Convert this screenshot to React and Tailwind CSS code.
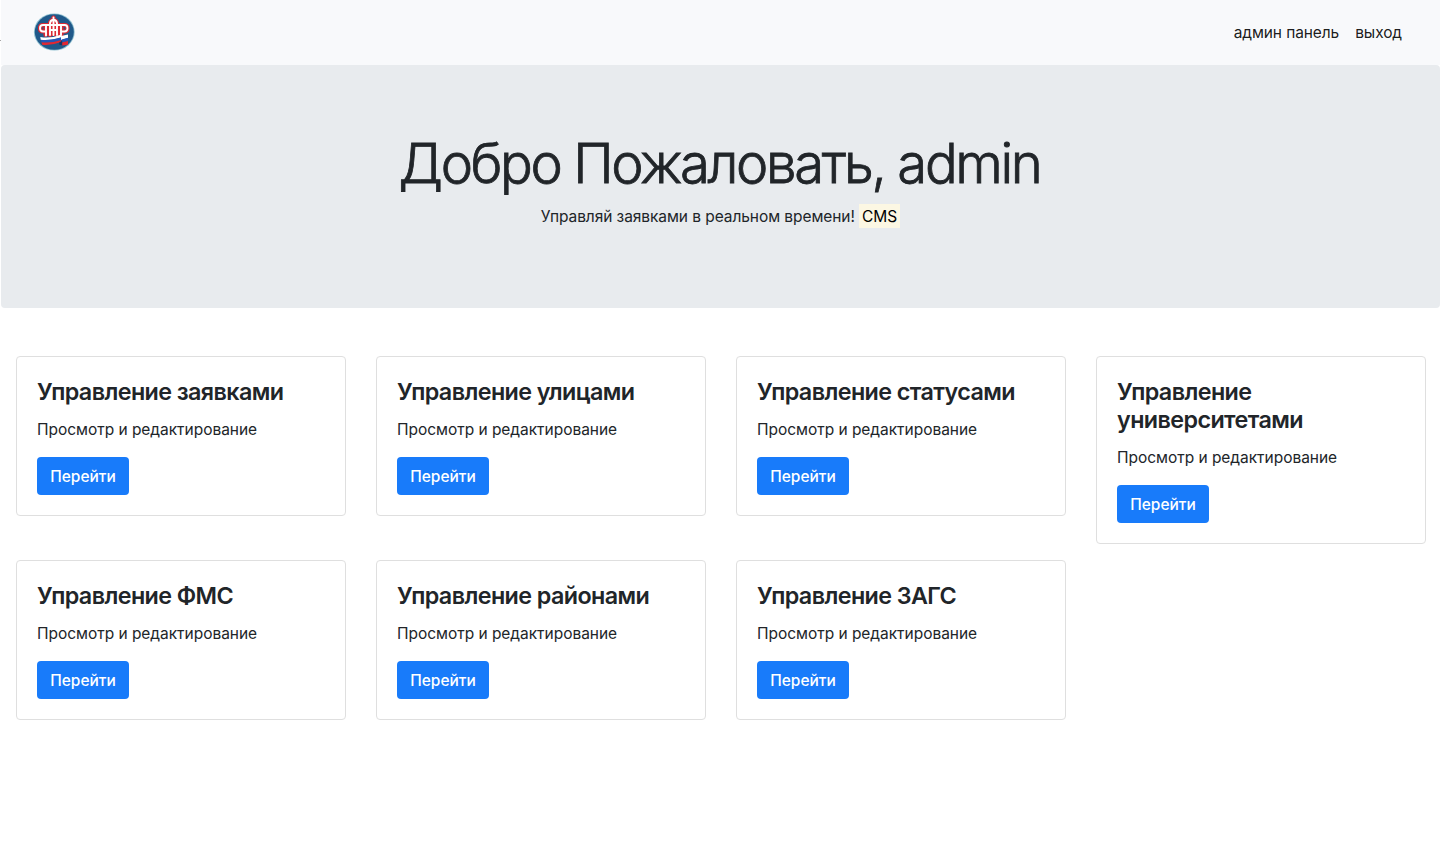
import React from "react";

function Logo() {
  return (
    <svg viewBox="0 0 42 38" className="mb-0.5 h-[38px] w-[42px]">
      <ellipse cx="21.3" cy="19" rx="20.4" ry="18.6" fill="#8fc0d0" />
      <ellipse cx="21.3" cy="19" rx="19.5" ry="17.8" fill="#20598a" />
      <g fill="none" strokeLinejoin="round" strokeLinecap="round">
        <g stroke="#dc2a35" strokeWidth="4.2">
          <path d="M20.500 4.500V8M17 22V10.500q0-3 3.500-4 3.500 1 3.500 4V22M12.500 22V12H10q-3 0-3 3.200t3 3.300h2.500M28.500 22V12h3q3 0 3 3.200t-3 3.300h-3M12 12h17" />
        </g>
        <path d="M12 11h17v12H12z" fill="#dc2a35" />
        <g stroke="#fff" strokeWidth="1.9">
          <path d="M20.500 4.500V22M17 22V10.500q0-3 3.500-4 3.500 1 3.500 4V22M13 22.500V12H10q-3 0-3 3.200t3 3.300h3M28 22V12h3.500q3 0 3 3.200t-3 3.300H28M13 12h15M17 17h7" />
        </g>
      </g>
      <path d="M7.300 24q10 2 21.200-2.500v3Q17 28.300 7.800 27z" fill="#fff" />
      <path d="M7.800 26.800q9 1.200 20.700-2.500v2.900Q17 31 8.500 29.400z" fill="#2456b8" />
      <path d="M8.500 29.200q9 1.200 20-2.300l-1 2.400Q18 32.800 9.200 31.800z" fill="#e22832" />
      <path d="M28 23l7-1.500v3.600l-7 2z" fill="#fff" />
      <path d="M28.800 26.600l6.200-1.800v3.300l-6.200 1.500z" fill="#2456b8" />
      <path d="M28.800 29.500l6.200-1.600v3.800l-6.200.8z" fill="#e22832" />
      <path d="M26.200 29.600l3-1.800v4.500l-2.800-.6z" fill="#1b3565" />
    </svg>
  );
}

const cards = [
  "Управление заявками",
  "Управление улицами",
  "Управление статусами",
  "Управление университетами",
  "Управление ФМС",
  "Управление районами",
  "Управление ЗАГС",
];

function Card({ title }) {
  return (
    <div className="rounded border border-[#dfdfdf] bg-white p-5">
      <h5 className="mb-3 pt-px text-[23.3px] leading-7 font-semibold tracking-[-0.58px]">{title}</h5>
      <p className="mb-[15px] leading-6 tracking-[-0.03px]">Просмотр и редактирование</p>
      <a className="inline-block h-[38px] w-[92px] rounded bg-[#187bfa] pt-2 text-center leading-6 font-medium text-white">Перейти</a>
    </div>
  );
}

export default function App() {
  return (
    <div className="relative min-h-[844px] overflow-hidden bg-white font-['Inter',sans-serif] text-[15.5px] leading-6 text-[#212529]">
      <span className="absolute top-10 left-0 h-px w-px bg-[#a5a5a5]" />
      <nav className="ml-px flex h-[65px] items-center justify-between bg-[#f8f9fb] pr-[38px] pl-8">
        <Logo />
        <div className="flex gap-4 tracking-[-0.1px] text-black/90">
          <a>админ панель</a>
          <a>выход</a>
        </div>
      </nav>
      <header className="ml-px h-[243px] rounded bg-[#e8ebee] pt-[65px] text-center">
        <h1 className="-ml-[2px] mb-[7px] text-[54.5px] leading-[67px] font-light tracking-[-2.4px] [-webkit-text-stroke:0.8px_#212529]">Добро Пожаловать, admin</h1>
        <p className="tracking-[-0.07px]">
          Управляй заявками в реальном времени! <mark className="inline-block h-6 bg-[#fcf7e3] px-[3px] leading-[25px] text-black">CMS</mark>
        </p>
      </header>
      <main className="mt-12 grid grid-cols-4 items-start gap-x-[30px] gap-y-4 pr-[14px] pl-4">
        {cards.map((t) => (
          <Card key={t} title={t} />
        ))}
      </main>
    </div>
  );
}
